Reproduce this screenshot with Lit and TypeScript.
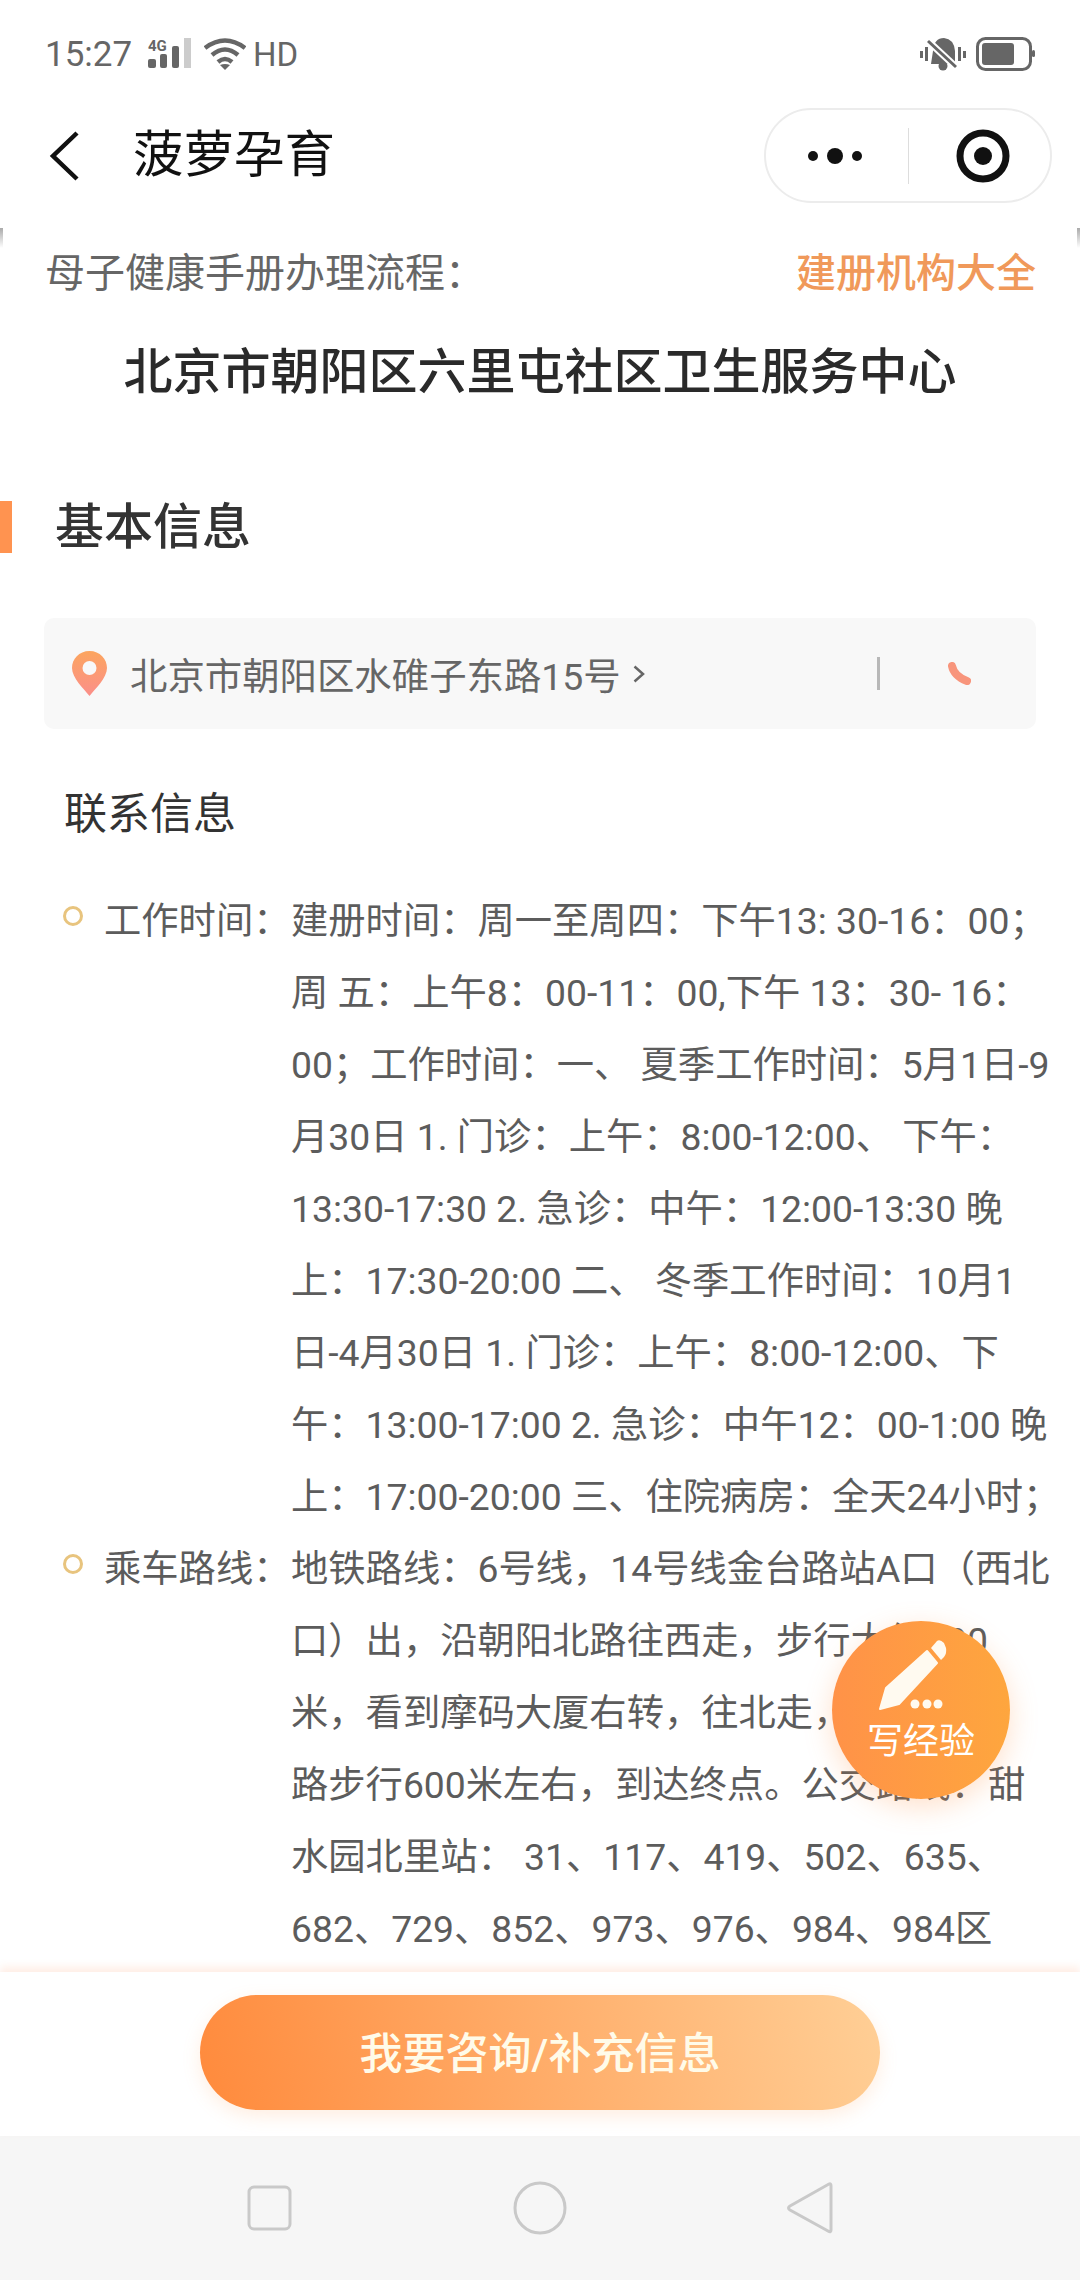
import { LitElement, html, css } from 'lit';
import { customElement } from 'lit/decorators.js';

const INFO = [
  {
    label: '工作时间：',
    lines: [
      '建册时间：周一至周四：下午13: 30-16：00；',
      '周 五：上午8：00-11：00,下午 13：30- 16：',
      '00；工作时间：一、 夏季工作时间：5月1日-9',
      '月30日 1. 门诊：上午：8:00-12:00、 下午：',
      '13:30-17:30 2. 急诊：中午：12:00-13:30 晚',
      '上：17:30-20:00 二、 冬季工作时间：10月1',
      '日-4月30日 1. 门诊：上午：8:00-12:00、下',
      '午：13:00-17:00 2. 急诊：中午12：00-1:00 晚',
      '上：17:00-20:00 三、住院病房：全天24小时；',
    ],
  },
  {
    label: '乘车路线：',
    lines: [
      '地铁路线：6号线，14号线金台路站A口（西北',
      '口）出，沿朝阳北路往西走，步行大约200',
      '米，看到摩码大厦右转，往北走，水碓子东',
      '路步行600米左右，到达终点。公交路线：甜',
      '水园北里站： 31、117、419、502、635、',
      '682、729、852、973、976、984、984区',
    ],
  },
];

@customElement('app-root')
export class AppRoot extends LitElement {
  static styles = css`
    :host {
      display: block;
      width: 1080px;
      height: 2280px;
      position: relative;
      overflow: hidden;
      background: #fff;
      font-family: Roboto, "Noto Sans CJK SC", sans-serif;
    }
    .page {
      height: 2280px;
      display: flex;
      flex-direction: column;
    }
    .status {
      height: 108px;
      flex: none;
      box-sizing: border-box;
      padding: 0 45px;
      display: flex;
      align-items: center;
      justify-content: space-between;
      color: #666;
    }
    .status-left, .status-right {
      display: flex;
      align-items: center;
    }
    .status svg { display: block; }
    .time { font-size: 35px; width: 102px; }
    .signal { margin-right: 11px; }
    .hd { font-size: 33px; margin-left: 7px; }
    .battery { margin-left: 10px; }
    .nav {
      height: 95px;
      flex: none;
      box-sizing: border-box;
      padding: 0 28px 0 47px;
      display: flex;
      align-items: center;
    }
    .nav h1 {
      margin: 0 0 0 54px;
      font-size: 50.5px;
      line-height: 1;
      font-weight: 400;
      color: #111;
      flex: 1;
    }
    .capsule {
      width: 288px;
      height: 95px;
      box-sizing: border-box;
      border: 2px solid #ececec;
      border-radius: 48px;
      display: flex;
      align-items: center;
    }
    .capsule > div {
      flex: 1;
      display: flex;
      justify-content: center;
      align-items: center;
    }
    .capsule .split {
      flex: none;
      width: 1px;
      height: 56px;
      background: #ddd;
    }
    .menu { margin-right: 4px; }
    .target { margin-left: 8px; }
    .content {
      flex: 1;
      min-height: 0;
      overflow: hidden;
      position: relative;
    }
    .corner {
      position: absolute;
      top: 25px;
      width: 3px;
      height: 20px;
      background: linear-gradient(#aaa, rgba(170, 170, 170, 0));
    }
    .corner.l { left: 0; }
    .corner.r { right: 0; }
    .flow {
      display: flex;
      justify-content: space-between;
      align-items: center;
      margin-top: 37px;
      padding: 0 44px 0 45px;
      height: 60px;
      font-size: 40px;
      color: #666;
    }
    .flow b {
      font-weight: 500;
      color: #f0995a;
    }
    .name {
      margin: 38px 0 0;
      text-align: center;
      font-size: 49px;
      line-height: 70px;
      font-weight: 500;
      color: #2a2a2a;
    }
    .heading {
      margin-top: 93px;
      height: 52px;
      display: flex;
      align-items: center;
      font-size: 49px;
      font-weight: 500;
      color: #333;
    }
    .heading i {
      width: 12px;
      height: 52px;
      background: #ff9350;
      margin-right: 43px;
    }
    .heading span { margin-bottom: 10px; }
    .address {
      margin: 65px 44px 0;
      height: 111px;
      box-sizing: border-box;
      padding: 0 65px 0 28px;
      background: #f8f8f8;
      border-radius: 10px;
      display: flex;
      align-items: center;
      font-size: 37.4px;
      color: #666;
    }
    .address span { margin-left: 23px; }
    .address .chev { margin-left: 12px; }
    .address .sep {
      width: 3px;
      height: 33px;
      background: #b8b8b8;
      margin: 0 68px 0 auto;
    }
    .sub {
      margin: 57px 0 0 64px;
      font-size: 43px;
      line-height: 56px;
      color: #333;
    }
    .rows { margin-top: 43px; }
    .row {
      display: flex;
      font-size: 37.3px;
      line-height: 72px;
      color: #5c5c5c;
    }
    .dot {
      flex: none;
      width: 20px;
      height: 20px;
      box-sizing: border-box;
      border: 3.5px solid #e8c47e;
      border-radius: 50%;
      margin: 21px 21px 0 63px;
    }
    .label { flex: none; width: 187px; white-space: nowrap; }
    .lines div { white-space: nowrap; }
    .fab {
      position: absolute;
      left: 832px;
      top: 1621px;
      width: 178px;
      height: 178px;
      border-radius: 50%;
      background: linear-gradient(90deg, #ff9248, #fea63e);
      box-shadow: 0 8px 28px rgba(255, 146, 72, 0.28);
      color: #fff;
      display: flex;
      flex-direction: column;
      align-items: center;
    }
    .fab svg { margin: 17px 16px 0 0; display: block; }
    .fab span { font-size: 36px; line-height: 44px; margin-top: 8px; }
    .footer {
      flex: none;
      height: 164px;
      position: relative;
      display: flex;
      justify-content: center;
      align-items: flex-start;
      background: #fff;
      box-shadow: 0 -5px 8px rgba(255, 170, 130, 0.2);
    }
    .cta {
      margin-top: 23px;
      width: 680px;
      height: 115px;
      box-sizing: border-box;
      padding-bottom: 6px;
      border-radius: 58px;
      background: linear-gradient(75deg, #ff8a3c, #ffcf96);
      box-shadow: 0 6px 18px rgba(255, 160, 90, 0.18);
      color: #fffbe9;
      font-size: 43px;
      font-weight: 500;
      display: flex;
      justify-content: center;
      align-items: center;
    }
    .softkeys {
      flex: none;
      height: 144px;
      background: #f6f6f6;
      display: grid;
      grid-template-columns: repeat(3, 60px);
      justify-content: center;
      column-gap: 210px;
      align-items: center;
    }
    .softkeys svg { display: block; }
  `;

  private signalIcon() {
    return html`<svg class="signal" width="46" height="36" viewBox="-1 -2 46 36" fill="#666">
      <text x="0" y="13" font-size="15" font-weight="700" font-family="Roboto">4G</text>
      <rect x="0" y="21" width="8" height="9" rx="2" />
      <rect x="12" y="16" width="7" height="14" rx="2" />
      <rect x="24" y="8" width="7" height="22" rx="2" />
      <rect x="36" y="0" width="7" height="30" fill="#ccc" />
    </svg>`;
  }

  private wifiIcon() {
    return html`<svg width="42" height="32" viewBox="0 0 42 32" fill="none" stroke="#666" stroke-width="4.5">
      <path d="M1 10 Q21 -5 41 10" />
      <path d="M8 17 Q21 6 34 17" />
      <path d="M14 24 Q21 18 28 24" />
      <path d="M16 27 L21 32 L26 27 Q21 25 16 27 Z" fill="#666" stroke="none" />
    </svg>`;
  }

  private muteIcon() {
    return html`<svg width="46" height="34" viewBox="0 0 46 34" fill="#666">
      <rect x="0" y="14" width="3" height="7" />
      <rect x="5" y="10" width="3" height="14" />
      <rect x="38" y="10" width="3" height="14" />
      <rect x="43" y="14" width="3" height="7" />
      <path d="M11 27 L13 14 Q14 1 24 1 Q34 2 35 14 L35 27 Z" />
      <circle cx="23" cy="29" r="4.5" />
      <path d="M7 3 L37 31" stroke="#fff" stroke-width="7" />
      <path d="M8 4 L36 30" stroke="#666" stroke-width="3" />
    </svg>`;
  }

  private batteryIcon() {
    return html`<svg class="battery" width="59" height="34" viewBox="0 0 59 34">
      <rect x="1.5" y="1.5" width="53" height="31" rx="8" fill="none" stroke="#666" stroke-width="3" />
      <rect x="6" y="6" width="32" height="22" rx="3" fill="#666" />
      <rect x="56" y="13" width="3" height="7" rx="1.5" fill="#666" />
    </svg>`;
  }

  private softKeys() {
    return html`
      <svg width="60" height="60" viewBox="0 0 60 60" fill="none" stroke="#c9c9c9" stroke-width="3">
        <rect x="9" y="9" width="41" height="42" rx="5" />
      </svg>
      <svg width="60" height="60" viewBox="0 0 60 60" fill="none" stroke="#c9c9c9" stroke-width="3">
        <circle cx="30" cy="30" r="25" />
      </svg>
      <svg width="60" height="60" viewBox="0 0 60 60" fill="none" stroke="#c9c9c9" stroke-width="3">
        <path d="M49 6 Q51 5 51 8 L51 52 Q51 55 48 53 L10 32 Q7 30 10 28 Z" />
      </svg>
    `;
  }

  render() {
    return html`
      <div class="page">
        <div class="status">
          <div class="status-left">
            <span class="time">15:27</span>
            ${this.signalIcon()} ${this.wifiIcon()}
            <span class="hd">HD</span>
          </div>
          <div class="status-right">${this.muteIcon()} ${this.batteryIcon()}</div>
        </div>
        <div class="nav">
          <svg width="32" height="52" viewBox="0 0 32 52" fill="none" stroke="#111" stroke-width="4.5">
            <path d="M30 3 L6 26 L30 49" />
          </svg>
          <h1>菠萝孕育</h1>
          <div class="capsule">
            <div>
              <svg class="menu" width="60" height="20" viewBox="0 0 60 20" fill="#111">
                <circle cx="8" cy="10" r="5" />
                <circle cx="30" cy="10" r="8" />
                <circle cx="52" cy="10" r="5" />
              </svg>
            </div>
            <div class="split"></div>
            <div>
              <svg class="target" width="56" height="56" viewBox="0 0 56 56">
                <circle cx="28" cy="28" r="23" fill="none" stroke="#111" stroke-width="7" />
                <circle cx="28" cy="28" r="9" fill="#111" />
              </svg>
            </div>
          </div>
        </div>
        <div class="content">
          <div class="corner l"></div>
          <div class="corner r"></div>
          <div class="flow"><span>母子健康手册办理流程：</span><b>建册机构大全</b></div>
          <div class="name">北京市朝阳区六里屯社区卫生服务中心</div>
          <div class="heading"><i></i><span>基本信息</span></div>
          <div class="address">
            <svg width="35" height="45" viewBox="0 0 35 45">
              <defs>
                <linearGradient id="pin" x1="0" y1="0" x2="0" y2="1">
                  <stop offset="0" stop-color="#fca55f" />
                  <stop offset="1" stop-color="#fb8f8a" />
                </linearGradient>
              </defs>
              <path d="M17.5 0 C7 0 0 8 0 17 C0 27 12 38 17.5 45 C23 38 35 27 35 17 C35 8 28 0 17.5 0 Z" fill="url(#pin)" />
              <circle cx="17.5" cy="17" r="7" fill="#f8f8f8" />
            </svg>
            <span>北京市朝阳区水碓子东路15号</span>
            <svg class="chev" width="12" height="18" viewBox="0 0 12 18" fill="none" stroke="#666" stroke-width="2.5">
              <path d="M1.5 1.5 L10 9 L1.5 16.5" />
            </svg>
            <div class="sep"></div>
            <svg width="23" height="23" viewBox="0 0 23 23" fill="none" stroke="#f8957c" stroke-width="8" stroke-linecap="round">
              <path d="M4 4 Q6 14 19 19" />
            </svg>
          </div>
          <div class="sub">联系信息</div>
          <div class="rows">
            ${INFO.map(
              (row) => html`<div class="row">
                <div class="dot"></div>
                <div class="label">${row.label}</div>
                <div class="lines">${row.lines.map((l) => html`<div>${l}</div>`)}</div>
              </div>`,
            )}
          </div>
        </div>
        <div class="footer"><div class="cta">我要咨询/补充信息</div></div>
        <div class="softkeys">${this.softKeys()}</div>
      </div>
      <div class="fab">
        <svg width="70" height="74" viewBox="0 0 70 74" fill="#fffaf0">
          <path d="M2 71 L8 50 L49 13 L59 25 L21 66 Z" stroke="#fffaf0" stroke-width="2" stroke-linejoin="round" />
          <path d="M53 10 L59 3 Q62 1 66 5 L68 10 Q69 15 66 19 L63 22 Z" />
          <circle cx="37" cy="66" r="4.5" />
          <circle cx="49" cy="66" r="4.5" />
          <circle cx="60" cy="66" r="4.5" />
        </svg>
        <span>写经验</span>
      </div>
    `;
  }
}
